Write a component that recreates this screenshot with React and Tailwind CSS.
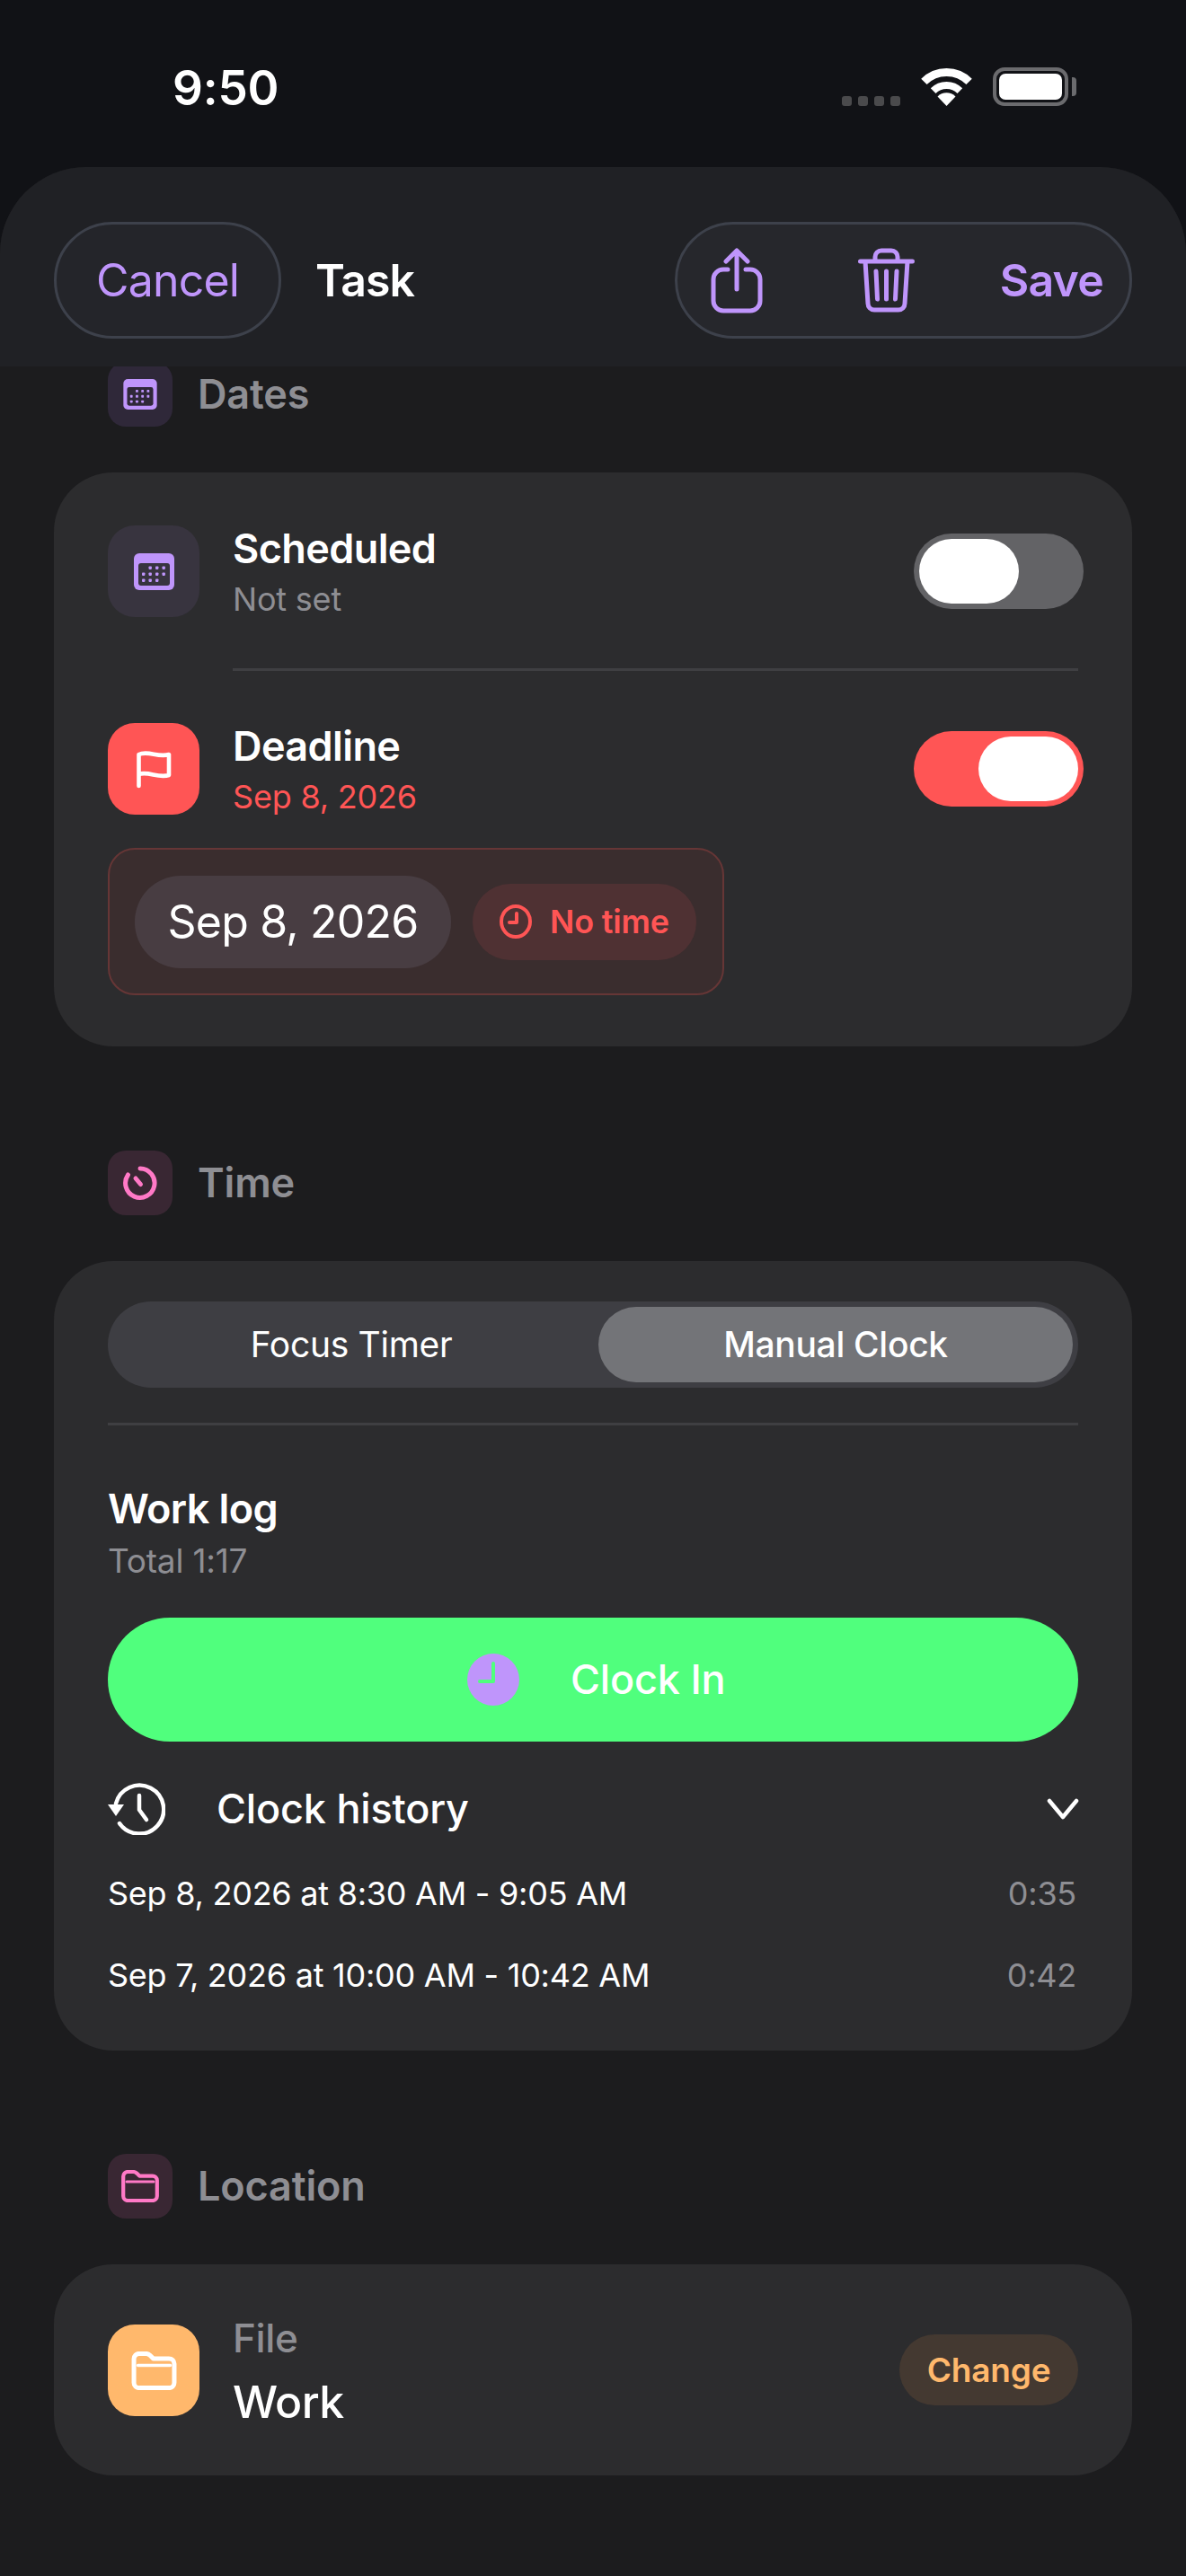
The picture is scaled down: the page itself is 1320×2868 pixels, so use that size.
import React from "react";

const Calendar = ({ w, h, bg }) => (
  <svg width={w} height={h} viewBox="0 0 45 41">
    <rect width="45" height="41" rx="6" fill="#BF95FB" />
    <rect x="5" y="11" width="35" height="25" rx="3" fill={bg} />
    {[[18, 16], [25.5, 16], [33, 16], [10.5, 23], [18, 23], [25.5, 23], [33, 23], [10.5, 30], [18, 30], [25.5, 30]].map(([x, y], i) => (
      <rect key={i} x={x - 1.5} y={y - 1.5} width="3.4" height="3.4" rx="0.8" fill="#BF95FB" />
    ))}
  </svg>
);

const Folder = ({ w, h, color }) => (
  <svg width={w} height={h} viewBox="0 0 42 36" fill="none" stroke={color} strokeLinejoin="round" strokeLinecap="round">
    <path strokeWidth="4.2" d="M2.2 7a5 5 0 0 1 5-5h6a6 6 0 0 1 4 1.6l3 3h14.6a5 5 0 0 1 5 5V29a5 5 0 0 1-5 5H7.2a5 5 0 0 1-5-5Z" />
    <path strokeWidth="3" d="M6 13H36" />
  </svg>
);

const SectionHead = ({ bg, title, children }) => (
  <div className="flex items-center gap-[28px] h-[72px] pl-[120px]">
    <div className={`w-[72px] h-[72px] rounded-[20px] flex items-center justify-center ${bg}`}>{children}</div>
    <span className="text-[45px] leading-[50px] font-semibold text-[#8E8E93] tracking-[-0.15px]">{title}</span>
  </div>
);

const Toggle = ({ on }) => (
  <div className={`w-[189px] h-[84px] rounded-[42px] p-[6px] flex ${on ? "bg-[#FF5555] justify-end" : "bg-[#636366] justify-start"}`}>
    <div className="w-[111px] h-[72px] rounded-[36px] bg-white" />
  </div>
);

const IconTile = ({ bg, children }) => (
  <div className={`w-[102px] h-[102px] rounded-[30px] shrink-0 flex items-center justify-center ${bg}`}>{children}</div>
);

const LogRow = ({ text, dur, cls }) => (
  <div className={`flex justify-between items-center h-[50px] text-[36px] leading-[50px] ${cls}`}>
    <span className="text-white tracking-[-0.25px]">{text}</span>
    <span className="text-[#8E8E93] pr-[2px] tracking-[-0.25px]">{dur}</span>
  </div>
);

export default function App() {
  return (
    <div className="w-[1320px] h-[2868px] bg-[#111216] overflow-hidden flex flex-col" style={{ fontFamily: "Inter, 'Noto Sans', sans-serif" }}>
      {/* status bar */}
      <div className="h-[186px] shrink-0 flex justify-between pl-[192px] pr-[122px]">
        <span className="mt-[68px] h-[60px] text-[53px] leading-[60px] font-semibold text-white tracking-[-0.2px]">9:50</span>
        <div className="mt-[75px] h-[43px] flex items-end">
          <div className="flex gap-[7px] mr-[23px]">
            {[0, 1, 2, 3].map((i) => (
              <div key={i} className="w-[11px] h-[11px] rounded-[3px] bg-[#4A4A4C]" />
            ))}
          </div>
          <svg width="57" height="42" viewBox="0 0 57 42" fill="none" stroke="#fff" className="mr-[23px]">
            <path strokeWidth="9" d="M3.4 14.9A35.5 35.5 0 0 1 53.6 14.9" />
            <path strokeWidth="8" d="M13.65 25.15A21 21 0 0 1 43.35 25.15" />
            <path fill="#fff" stroke="none" d="M28.5 42 18.5 31.5A14 14 0 0 1 38.5 31.5Z" />
          </svg>
          <div className="w-[84px] h-[43px] rounded-[13px] border-[4px] border-[#6B6B6E] p-[3px]">
            <div className="w-full h-full rounded-[7px] bg-white" />
          </div>
          <div className="w-[5px] h-[21px] rounded-r-[4px] bg-[#6B6B6E] ml-[4px] mb-[11px]" />
        </div>
      </div>

      {/* sheet */}
      <div className="flex-1 bg-[#1C1C1E] rounded-t-[96px] overflow-hidden">
        <div className="relative z-10 h-[222px] bg-[#202125] px-[60px] pt-[61px] flex items-start">
          <div className="w-[253px] h-[130px] rounded-[65px] bg-[#24252A] border-[3px] border-[#3D414B] flex items-center justify-center shrink-0">
            <span className="text-[50px] leading-[60px] text-[#BF95FB] tracking-[-0.8px]">Cancel</span>
          </div>
          <span className="ml-[38px] h-[130px] text-[50px] leading-[130px] font-semibold text-white tracking-[-1px]">Task</span>
          <div className="ml-auto w-[509px] h-[130px] rounded-[65px] bg-[#26272C] border-[3px] border-[#3D414B] flex items-center pl-[37px] pr-[29px] shrink-0">
            <svg width="58" height="73" viewBox="0 0 58 73" fill="none" stroke="#BF95FB" strokeWidth="5" strokeLinecap="round" strokeLinejoin="round">
              <path d="M19 24H14a11 11 0 0 0-11 11V59a11 11 0 0 0 11 11H44a11 11 0 0 0 11-11V35a11 11 0 0 0-11-11H39" />
              <path d="M29 3V46M17 15 29 3 41 15" />
            </svg>
            <svg width="63" height="72" viewBox="0 0 63 72" fill="none" stroke="#BF95FB" strokeWidth="5" strokeLinecap="round" strokeLinejoin="round" className="ml-[106px]">
              <path d="M2.5 15H60.5M19 15V10a7 7 0 0 1 7-7H37a7 7 0 0 1 7 7V15M8 15 11 62a7 7 0 0 0 7 7H45a7 7 0 0 0 7-7L55 15" />
              <path d="M20 26 21.5 57M31.5 26V57M43 26 41.5 57" />
            </svg>
            <span className="ml-auto text-[50px] leading-[60px] font-semibold text-[#BF95FB] tracking-[-0.8px]">Save</span>
          </div>
        </div>

        <div className="-mt-[5px]">
          <SectionHead bg="bg-[#2F2839]" title="Dates">
            <Calendar w={38} h={34} bg="#2F2839" />
          </SectionHead>

          <div className="mx-[60px] mt-[51px] h-[639px] rounded-[66px] bg-[#2C2C2E] px-[60px] pt-[59px]">
            <div className="flex items-start h-[102px]">
              <IconTile bg="bg-[#38343F]"><Calendar w={45} h={41} bg="#38343F" /></IconTile>
              <div className="ml-[37px] flex-1 pt-[1px]">
                <div className="text-[45px] leading-[50px] font-semibold text-white tracking-[-0.6px]">Scheduled</div>
                <div className="mt-[6px] text-[36px] leading-[50px] text-[#8E8E93] tracking-[-0.2px]">Not set</div>
              </div>
              <div className="mt-[9px] mr-[-6px]"><Toggle /></div>
            </div>
            <div className="ml-[139px] mt-[57px] h-[3px] bg-[#3F3F42]" />
            <div className="flex items-start h-[102px] mt-[58px]">
              <IconTile bg="bg-[#FF5555]">
                <svg width="40" height="43" viewBox="0 0 40 43" fill="none" stroke="#fff" strokeWidth="4.6" strokeLinecap="round" strokeLinejoin="round">
                  <path d="M3.5 40V5C14 0 25 9 37 5V28C25 32 14 23 3.5 27" />
                </svg>
              </IconTile>
              <div className="ml-[37px] flex-1 pt-[1px]">
                <div className="text-[45px] leading-[50px] font-semibold text-white tracking-[-0.6px]">Deadline</div>
                <div className="mt-[6px] text-[36px] leading-[50px] text-[#FF5555] tracking-[-0.2px]">Sep 8, 2026</div>
              </div>
              <div className="mt-[9px] mr-[-6px]"><Toggle on /></div>
            </div>
            <div className="mt-[37px] w-[686px] h-[164px] rounded-[30px] bg-[#3A2D2E] border-[2px] border-[#663636] pl-[28px] flex items-center">
              <div className="w-[352px] h-[103px] rounded-[51px] bg-[#483D42] flex items-center justify-center text-[50px] leading-[60px] text-white tracking-[-0.8px]">Sep 8, 2026</div>
              <div className="ml-[24px] w-[249px] h-[85px] rounded-[42px] bg-[#4F3133] flex items-center pl-[30px]">
                <svg width="36" height="38" viewBox="0 0 36 38" fill="none" stroke="#FF5555" strokeWidth="4" strokeLinecap="round" strokeLinejoin="round">
                  <ellipse cx="18" cy="19" rx="16" ry="17" />
                  <path d="M19 10V20H11" />
                </svg>
                <span className="ml-[20px] text-[36px] leading-[50px] font-semibold text-[#FF5555] tracking-[-0.2px]">No time</span>
              </div>
            </div>
          </div>

          <div className="mt-[116px]">
            <SectionHead bg="bg-[#392733]" title="Time">
              <svg width="38" height="38" viewBox="0 0 38 38" fill="none" stroke="#FF79C6" strokeLinecap="round">
                <path strokeWidth="5" d="M19 3A16.2 16.2 0 1 1 5.5 10" />
                <path strokeWidth="5" d="M14 14 19.5 20.5" />
              </svg>
            </SectionHead>
          </div>

          <div className="mx-[60px] mt-[51px] h-[879px] rounded-[66px] bg-[#2C2C2E] px-[60px] pt-[45px]">
            <div className="h-[96px] rounded-[48px] bg-[#3E3E43] p-[6px] flex items-center">
              <div className="w-[530px] text-center text-[39px] leading-[50px] text-white tracking-[-0.3px]">Focus Timer</div>
              <div className="ml-[10px] w-[528px] h-[84px] rounded-[42px] bg-[#737478] flex items-center justify-center text-[39px] leading-[50px] font-medium text-white tracking-[-0.3px]">Manual Clock</div>
            </div>
            <div className="mt-[39px] h-[3px] bg-[#3F3F42]" />
            <div className="mt-[63px] text-[45px] leading-[60px] font-semibold text-white tracking-[-0.6px]">Work log</div>
            <div className="mt-[3px] text-[37px] leading-[50px] text-[#8E8E93] tracking-[-0.2px]">Total 1:17</div>
            <div className="mt-[38px] h-[138px] rounded-[69px] bg-[#50FF7D] flex items-center pl-[400px]">
              <svg width="58" height="58" viewBox="0 0 58 58" fill="none">
                <circle cx="29" cy="29" r="29" fill="#BF95FB" />
                <path d="M29 11V31H14" stroke="#50FF7D" strokeWidth="4" strokeLinecap="round" strokeLinejoin="round" />
              </svg>
              <span className="ml-[57px] text-[45px] leading-[60px] font-medium text-white tracking-[-0.2px]">Clock In</span>
            </div>
            <div className="mt-[45px] h-[59px] flex items-center">
              <svg width="64" height="59" viewBox="0 0 64 59" fill="none" stroke="#fff" strokeWidth="4.5" strokeLinecap="round" strokeLinejoin="round">
                <path d="M13 46A27 27 0 1 0 9 24" />
                <path fill="#fff" stroke="none" d="M0 25H18L9 38Z" />
                <path d="M35 15V31L43 42" />
              </svg>
              <span className="ml-[57px] text-[45px] leading-[60px] font-medium text-white tracking-[-0.2px]">Clock history</span>
              <svg width="36" height="24" viewBox="0 0 36 24" fill="none" stroke="#fff" strokeWidth="4.5" strokeLinecap="round" strokeLinejoin="round" className="ml-auto mr-[-1px]">
                <path d="M3 3 18 21 33 3" />
              </svg>
            </div>
            <LogRow cls="mt-[40px]" text="Sep 8, 2026 at 8:30 AM - 9:05 AM" dur="0:35" />
            <LogRow cls="mt-[41px]" text="Sep 7, 2026 at 10:00 AM - 10:42 AM" dur="0:42" />
          </div>

          <div className="mt-[115px]">
            <SectionHead bg="bg-[#392733]" title="Location">
              <Folder w={42} h={36} color="#FF79C6" />
            </SectionHead>
          </div>

          <div className="mx-[60px] mt-[51px] h-[235px] rounded-[66px] bg-[#2C2C2E] px-[60px] pt-[67px] flex items-start">
            <IconTile bg="bg-[#FFB86C]"><Folder w={51} h={43} color="#fff" /></IconTile>
            <div className="ml-[37px] flex-1 -mt-[10px]">
              <div className="text-[44px] leading-[50px] font-medium text-[#8E8E93] tracking-[-0.4px]">File</div>
              <div className="mt-[16px] text-[50px] leading-[60px] font-medium text-white tracking-[-0.6px]">Work</div>
            </div>
            <div className="mt-[11px] w-[199px] h-[79px] rounded-[40px] bg-[#443931] flex items-center justify-center text-[37px] leading-[50px] font-semibold text-[#FFB86C] tracking-[-0.2px]">Change</div>
          </div>
        </div>
      </div>
    </div>
  );
}
